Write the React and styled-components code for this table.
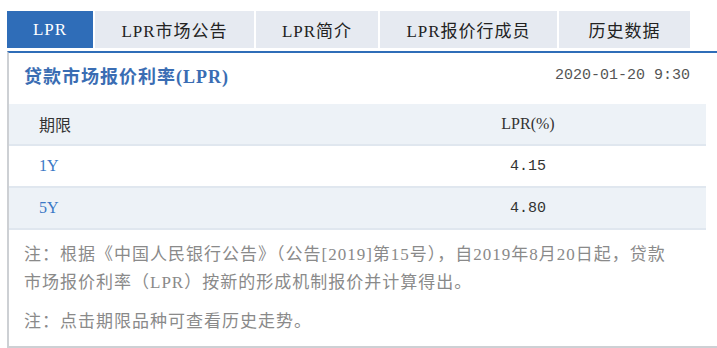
import React from "react";
import styled, { createGlobalStyle } from "styled-components";

const GlobalStyle = createGlobalStyle`
  html, body {
    margin: 0;
    overflow: hidden;
  }
  body {
    padding: 11px 0 0 7px;
    background: #fff;
    font-family: "Liberation Serif", "Noto Sans CJK SC", serif;
  }
`;

const Tabs = styled.div`
  display: flex;
  gap: 2px;
  margin-bottom: 3px;
`;

const Tab = styled.div`
  width: ${(props) => props.$w}px;
  height: 37px;
  display: flex;
  align-items: center;
  justify-content: center;
  font-size: 17px;
  letter-spacing: 1px;
  background-color: ${(props) => (props.$active ? "#2f6db8" : "#e6eaf1")};
  color: ${(props) => (props.$active ? "#fff" : "#222")};
  cursor: pointer;
`;

const Panel = styled.div`
  width: 720px;
  border-top: 2px solid #2f6db8;
  border-left: 2px solid #cdd0d4;
  border-bottom: 2px solid #cdd0d4;
`;

const Inner = styled.div`
  width: 697px;
`;

const TitleRow = styled.div`
  height: 44px;
  padding: 0 16px 0 15px;
  display: flex;
  align-items: center;
  justify-content: space-between;
  margin-bottom: 7px;
`;

const Title = styled.h2`
  margin: 0;
  font-size: 18px;
  font-weight: 700;
  letter-spacing: 1px;
  color: #3a6db3;
`;

const Stamp = styled.span`
  font-family: "Liberation Mono", monospace;
  font-size: 15px;
  color: #555;
`;

const Row = styled.div`
  display: grid;
  grid-template-columns: 341px 1fr;
  align-items: center;
  height: 42px;
  box-sizing: border-box;
  border-bottom: 2px solid #e0e7ef;
  background-color: ${(props) => (props.$shade ? "#edf2f7" : "#fff")};
  font-size: 16px;
`;

const Term = styled.div`
  padding-left: 30px;
  color: ${(props) => (props.$head ? "#333" : "#3b78c6")};
`;

const Rate = styled.div`
  text-align: center;
  color: #333;
  font-family: ${(props) =>
    props.$mono ? '"Liberation Mono", monospace' : "inherit"};
  font-size: ${(props) => (props.$mono ? "15px" : "16px")};
`;

const Notes = styled.div`
  padding: 11px 26px 10px 15px;
  color: #8a8a8a;
  font-size: 17px;
  letter-spacing: 1px;
  line-height: 28px;
`;

const Note = styled.p`
  margin: 0;
  & + & {
    margin-top: 11px;
  }
`;

const tabs = [
  { label: "LPR", w: 86, active: true },
  { label: "LPR市场公告", w: 159 },
  { label: "LPR简介", w: 122 },
  { label: "LPR报价行成员", w: 177 },
  { label: "历史数据", w: 131 },
];

const rates = [
  { term: "1Y", value: "4.15" },
  { term: "5Y", value: "4.80" },
];

const App = () => {
  return (
    <>
      <GlobalStyle />
      <Tabs>
        {tabs.map((t) => (
          <Tab key={t.label} $w={t.w} $active={t.active}>
            {t.label}
          </Tab>
        ))}
      </Tabs>
      <Panel>
        <Inner>
          <TitleRow>
            <Title>贷款市场报价利率(LPR)</Title>
            <Stamp>2020-01-20 9:30</Stamp>
          </TitleRow>
          <Row $shade>
            <Term $head>期限</Term>
            <Rate>LPR(%)</Rate>
          </Row>
          {rates.map((r, i) => (
            <Row key={r.term} $shade={i % 2 === 1}>
              <Term>{r.term}</Term>
              <Rate $mono>{r.value}</Rate>
            </Row>
          ))}
          <Notes>
            <Note>
              注：根据《中国人民银行公告》（公告[2019]第15号），自2019年8月20日起，贷款市场报价利率（LPR）按新的形成机制报价并计算得出。
            </Note>
            <Note>注：点击期限品种可查看历史走势。</Note>
          </Notes>
        </Inner>
      </Panel>
    </>
  );
};

export default App;
